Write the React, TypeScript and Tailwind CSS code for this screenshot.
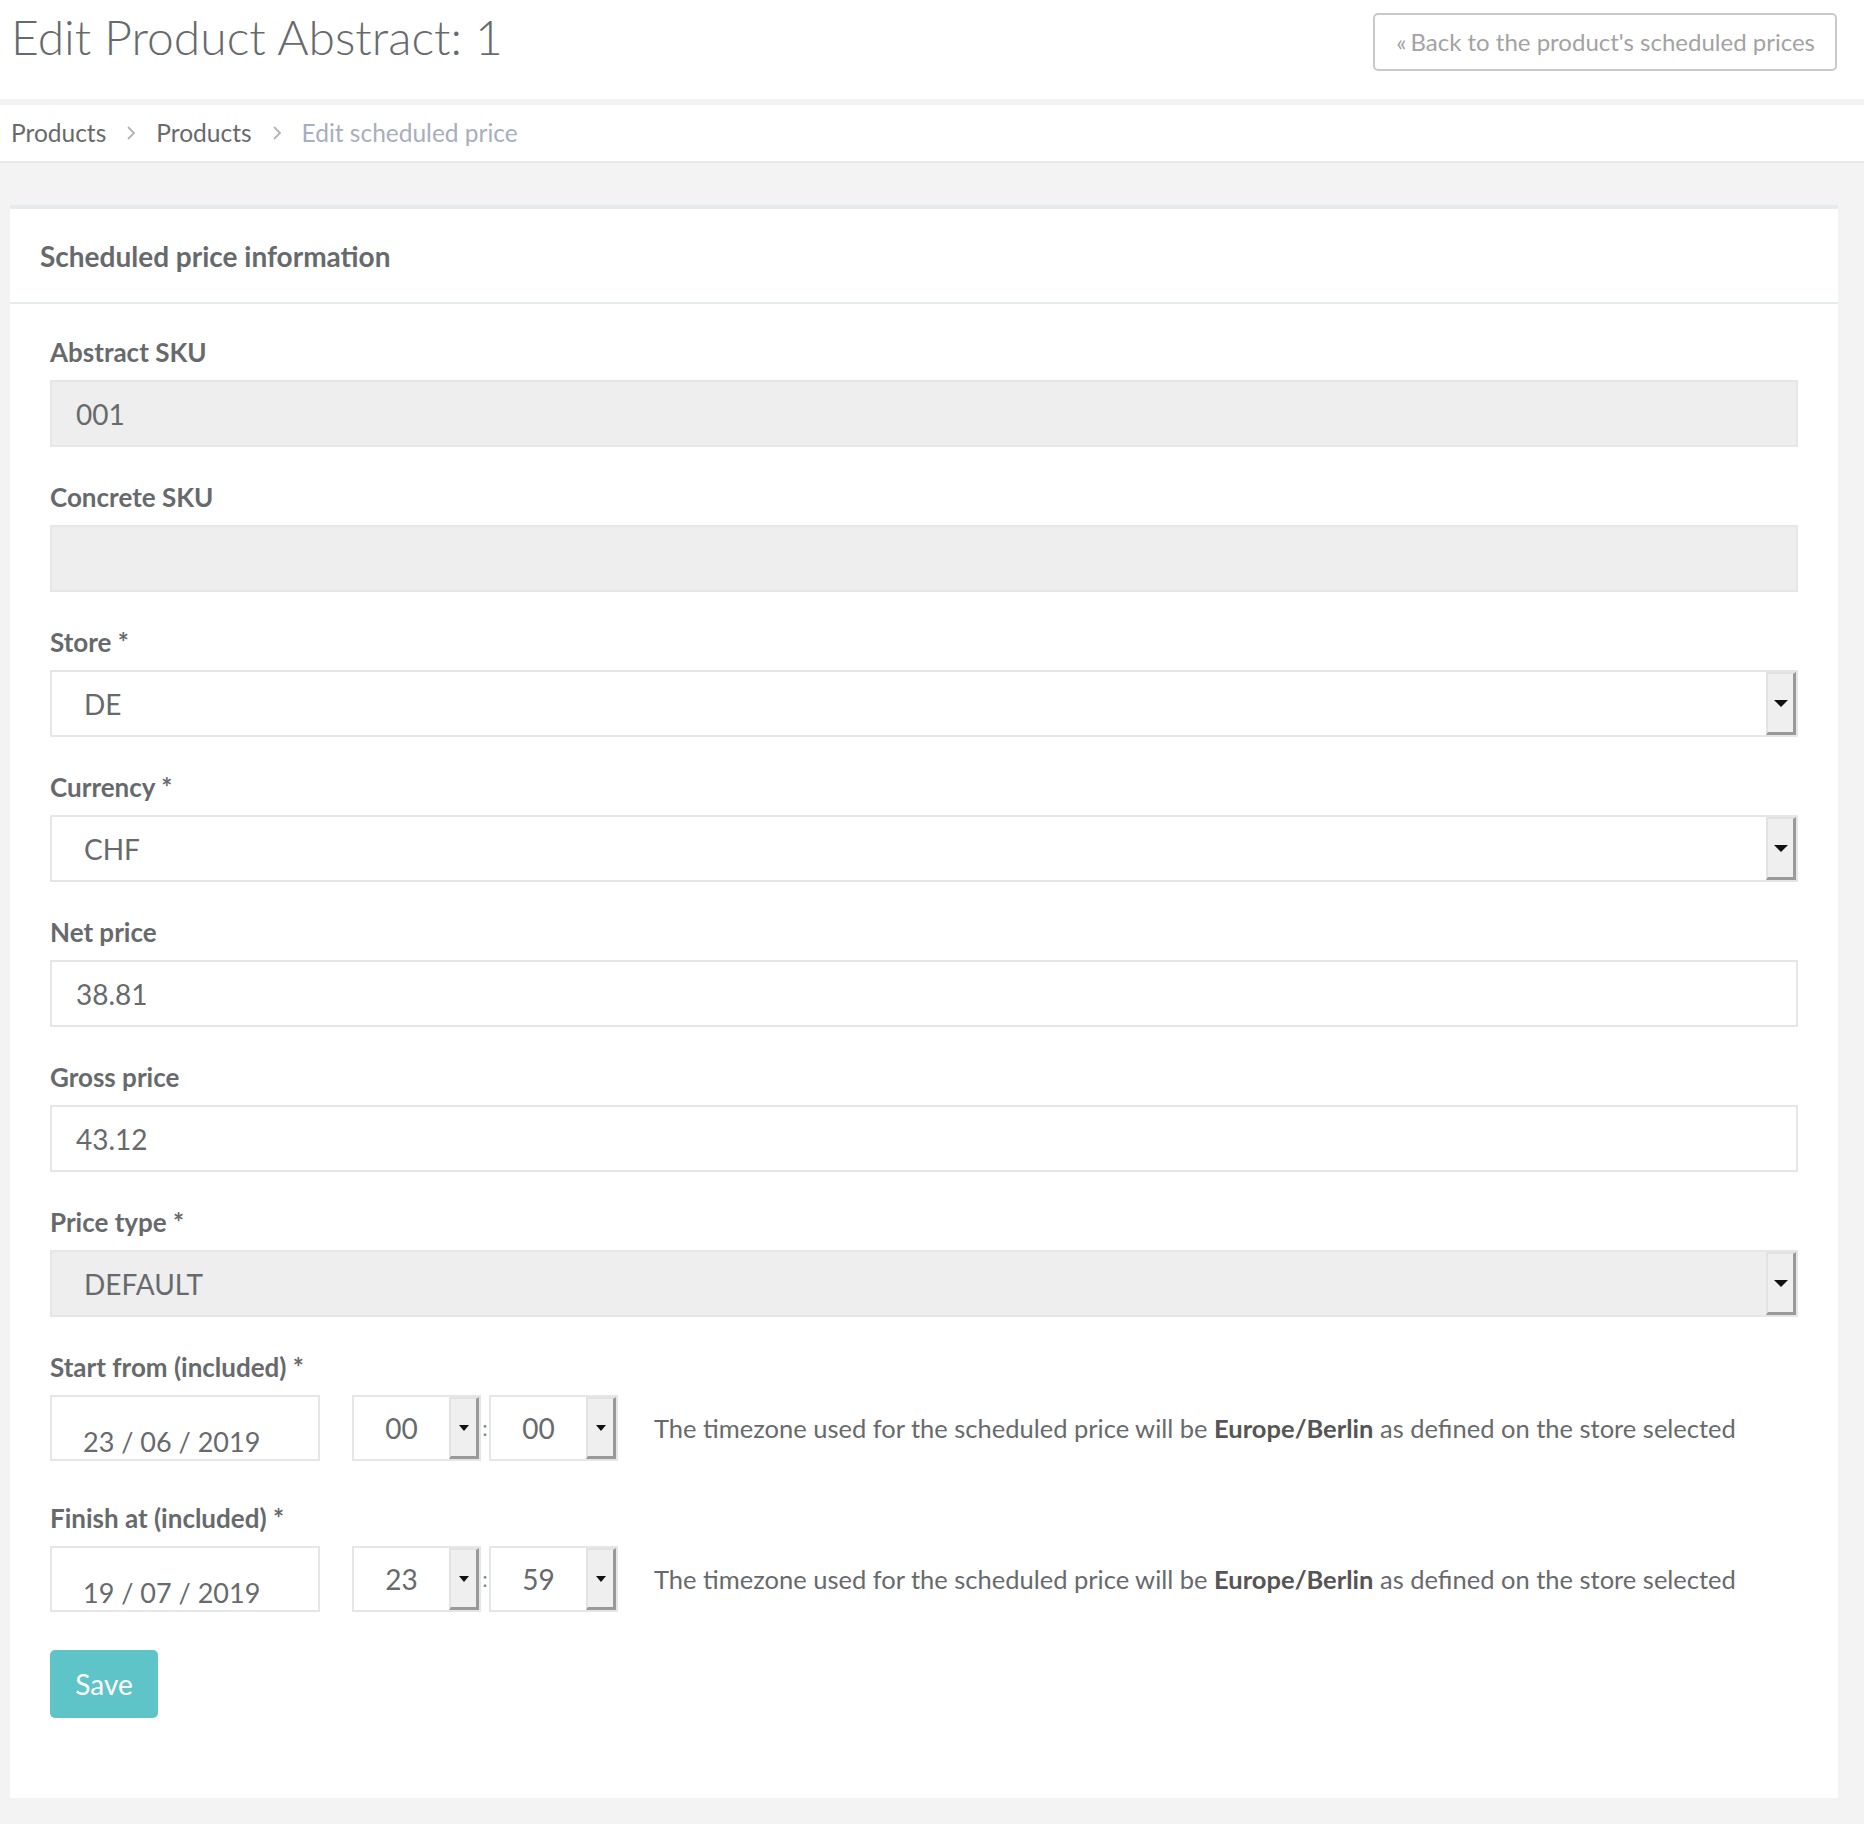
const Arrow = ({ small = false }: { small?: boolean }) => (
  <svg width={small ? 10 : 14} height={small ? 6 : 7} viewBox={small ? "0 0 10 6" : "0 0 14 7"}>
    <path d={small ? "M0 0h10L5 6z" : "M0 0h14L7 7z"} fill="#111" />
  </svg>
);

const Chevron = () => (
  <svg width="10" height="16" viewBox="0 0 10 16" className="mx-[20px]">
    <path d="M2 2l6 6-6 6" fill="none" stroke="#b3b3b3" strokeWidth="1.8" />
  </svg>
);

const Label = ({ children, req = false }: { children: React.ReactNode; req?: boolean }) => (
  <div className="h-[30px] leading-[30px] text-[26px] font-bold mb-[13px]">
    {children}
    {req && <span> *</span>}
  </div>
);

function TextField({ label, value, disabled = false }: { label: string; value: string; disabled?: boolean }) {
  return (
    <div className="mb-[35px]">
      <Label>{label}</Label>
      <div
        className={`h-[67px] border-2 border-[#e5e6e7] flex items-center pl-[24px] text-[28px] ${
          disabled ? "bg-[#eeeeee]" : "bg-white"
        }`}
      >
        {value}
      </div>
    </div>
  );
}

function SelectField({ label, value, disabled = false }: { label: string; value: string; disabled?: boolean }) {
  return (
    <div className="mb-[35px]">
      <Label req>{label}</Label>
      <div
        className={`h-[67px] border-2 border-[#e5e6e7] flex items-center text-[28px] ${
          disabled ? "bg-[#eeeeee]" : "bg-white"
        }`}
      >
        <span className="flex-1 pl-[32px]">{value}</span>
        <div className="h-full w-[30px] bg-[#efefef] border-l-2 border-t-2 border-[#e2e2e2] border-r-[3px] border-b-[3px] border-r-[#999] border-b-[#999] flex items-center justify-center">
          <Arrow />
        </div>
      </div>
    </div>
  );
}

function TimeSelect({ value }: { value: string }) {
  return (
    <div className="w-[129px] h-[66px] border-2 border-[#e5e6e7] bg-white flex items-center text-[28px]">
      <span className="flex-1 text-center">{value}</span>
      <div className="h-full w-[30px] bg-[#efefef] border-l-2 border-t-2 border-[#e2e2e2] border-r-[3px] border-b-[3px] border-r-[#999] border-b-[#999] flex items-center justify-center">
        <Arrow small />
      </div>
    </div>
  );
}

function DateRow({ label, date, hh, mm, mb }: { label: string; date: string; hh: string; mm: string; mb: string }) {
  return (
    <div className={mb}>
      <Label req>{label}</Label>
      <div className="flex items-center h-[66px]">
        <div className="w-[270px] h-[66px] border-2 border-[#e5e6e7] bg-white flex items-end pl-[31px] text-[27px] leading-[34px]">
          {date}
        </div>
        <div className="ml-[32px] flex items-center">
          <TimeSelect value={hh} />
          <span className="w-[8px] text-center text-[22px] leading-none text-[#888]">:</span>
          <TimeSelect value={mm} />
        </div>
        <p className="ml-[36px] text-[25.5px]">
          The timezone used for the scheduled price will be <b className="text-[#555]">Europe/Berlin</b> as defined on the
          store selected
        </p>
      </div>
    </div>
  );
}

export default function App() {
  return (
    <div className="min-h-[1824px] bg-[#f3f3f4] font-['Lato',sans-serif] text-[#676a6c]">
      {/* Page header */}
      <header className="bg-white h-[99px] flex items-start justify-between pl-[11px] pr-[27px]">
        <h1 className="text-[48px] font-light leading-none mt-[13px]">Edit Product Abstract: 1</h1>
        <a className="mt-[13px] h-[58px] pl-[21px] pr-[20px] border-2 border-[#c9c9c9] rounded-[5px] flex items-center text-[24px] text-[#a3a3a3]">
          <span className="mr-[4px]">«</span>Back to the product's scheduled prices
        </a>
      </header>
      <div className="h-[6px]" />

      {/* Breadcrumb */}
      <nav className="bg-white h-[58px] border-b-2 border-[#e7eaec] flex items-center pl-[11px] text-[24.5px]">
        <span>Products</span>
        <Chevron />
        <span>Products</span>
        <Chevron />
        <span className="text-[#a7aebd]">Edit scheduled price</span>
      </nav>

      {/* Card */}
      <div className="mt-[42px] ml-[10px] mr-[26px] bg-white border-t-4 border-[#e7eaec]">
        <div className="h-[95px] border-b-2 border-[#e7eaec] flex items-center px-[30px] text-[28px] font-bold">
          Scheduled price information
        </div>
        <div className="px-[40px] pt-[33px] pb-[80px]">
          <TextField label="Abstract SKU" value="001" disabled />
          <TextField label="Concrete SKU" value="" disabled />
          <SelectField label="Store" value="DE" />
          <SelectField label="Currency" value="CHF" />
          <TextField label="Net price" value="38.81" />
          <TextField label="Gross price" value="43.12" />
          <SelectField label="Price type" value="DEFAULT" disabled />
          <DateRow label="Start from (included)" date="23 / 06 / 2019" hh="00" mm="00" mb="mb-[42px]" />
          <DateRow label="Finish at (included)" date="19 / 07 / 2019" hh="23" mm="59" mb="mb-[38px]" />
          <button className="w-[108px] h-[68px] rounded-[5px] bg-[#5fc4c8] text-white text-[28px]">Save</button>
        </div>
      </div>
    </div>
  );
}
